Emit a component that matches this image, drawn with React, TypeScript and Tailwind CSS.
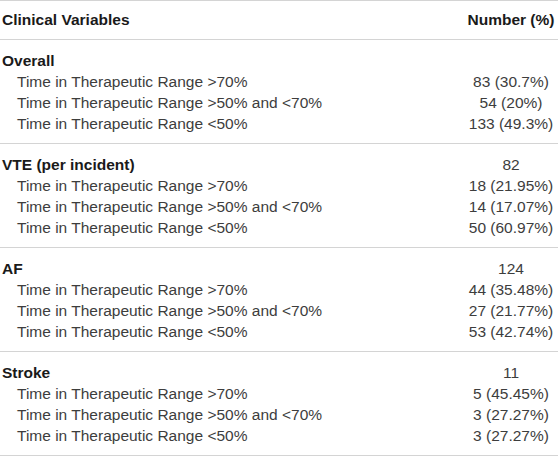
const sections = [
    { title: "Overall", total: "", rows: ["83 (30.7%)", "54 (20%)", "133 (49.3%)"] },
    { title: "VTE (per incident)", total: "82", rows: ["18 (21.95%)", "14 (17.07%)", "50 (60.97%)"] },
    { title: "AF", total: "124", rows: ["44 (35.48%)", "27 (21.77%)", "53 (42.74%)"] },
    { title: "Stroke", total: "11", rows: ["5 (45.45%)", "3 (27.27%)", "3 (27.27%)"] },
];

const labels = [
    "Time in Therapeutic Range >70%",
    "Time in Therapeutic Range >50% and <70%",
    "Time in Therapeutic Range <50%",
];

const App = () => {
    return (
        <div className="w-[558px] h-[457px] bg-white font-['Liberation_Sans',Arial,sans-serif] text-[15.5px] text-[#3d3d3d]">
            <div className="border-t border-[#d4d4d4]" />
            <div className="flex items-center h-[39px] border-b border-[#d4d4d4] font-bold text-[#1a1a1a]">
                <div className="flex-1 pl-[2px]">Clinical Variables</div>
                <div className="w-[90px] mr-[2px] text-center">Number (%)</div>
            </div>
            {sections.map((s) => (
                <div key={s.title} className="pt-[10px] pb-[9px] border-b border-[#d4d4d4] leading-[21px]">
                    <div className="flex">
                        <div className="flex-1 pl-[2px] font-bold text-[#1a1a1a]">{s.title}</div>
                        <div className="w-[90px] mr-[2px] text-center">{s.total}</div>
                    </div>
                    {s.rows.map((v, i) => (
                        <div key={i} className="flex">
                            <div className="flex-1 pl-[17px]">{labels[i]}</div>
                            <div className="w-[90px] mr-[2px] text-center">{v}</div>
                        </div>
                    ))}
                </div>
            ))}
        </div>
    );
};

export default App;
